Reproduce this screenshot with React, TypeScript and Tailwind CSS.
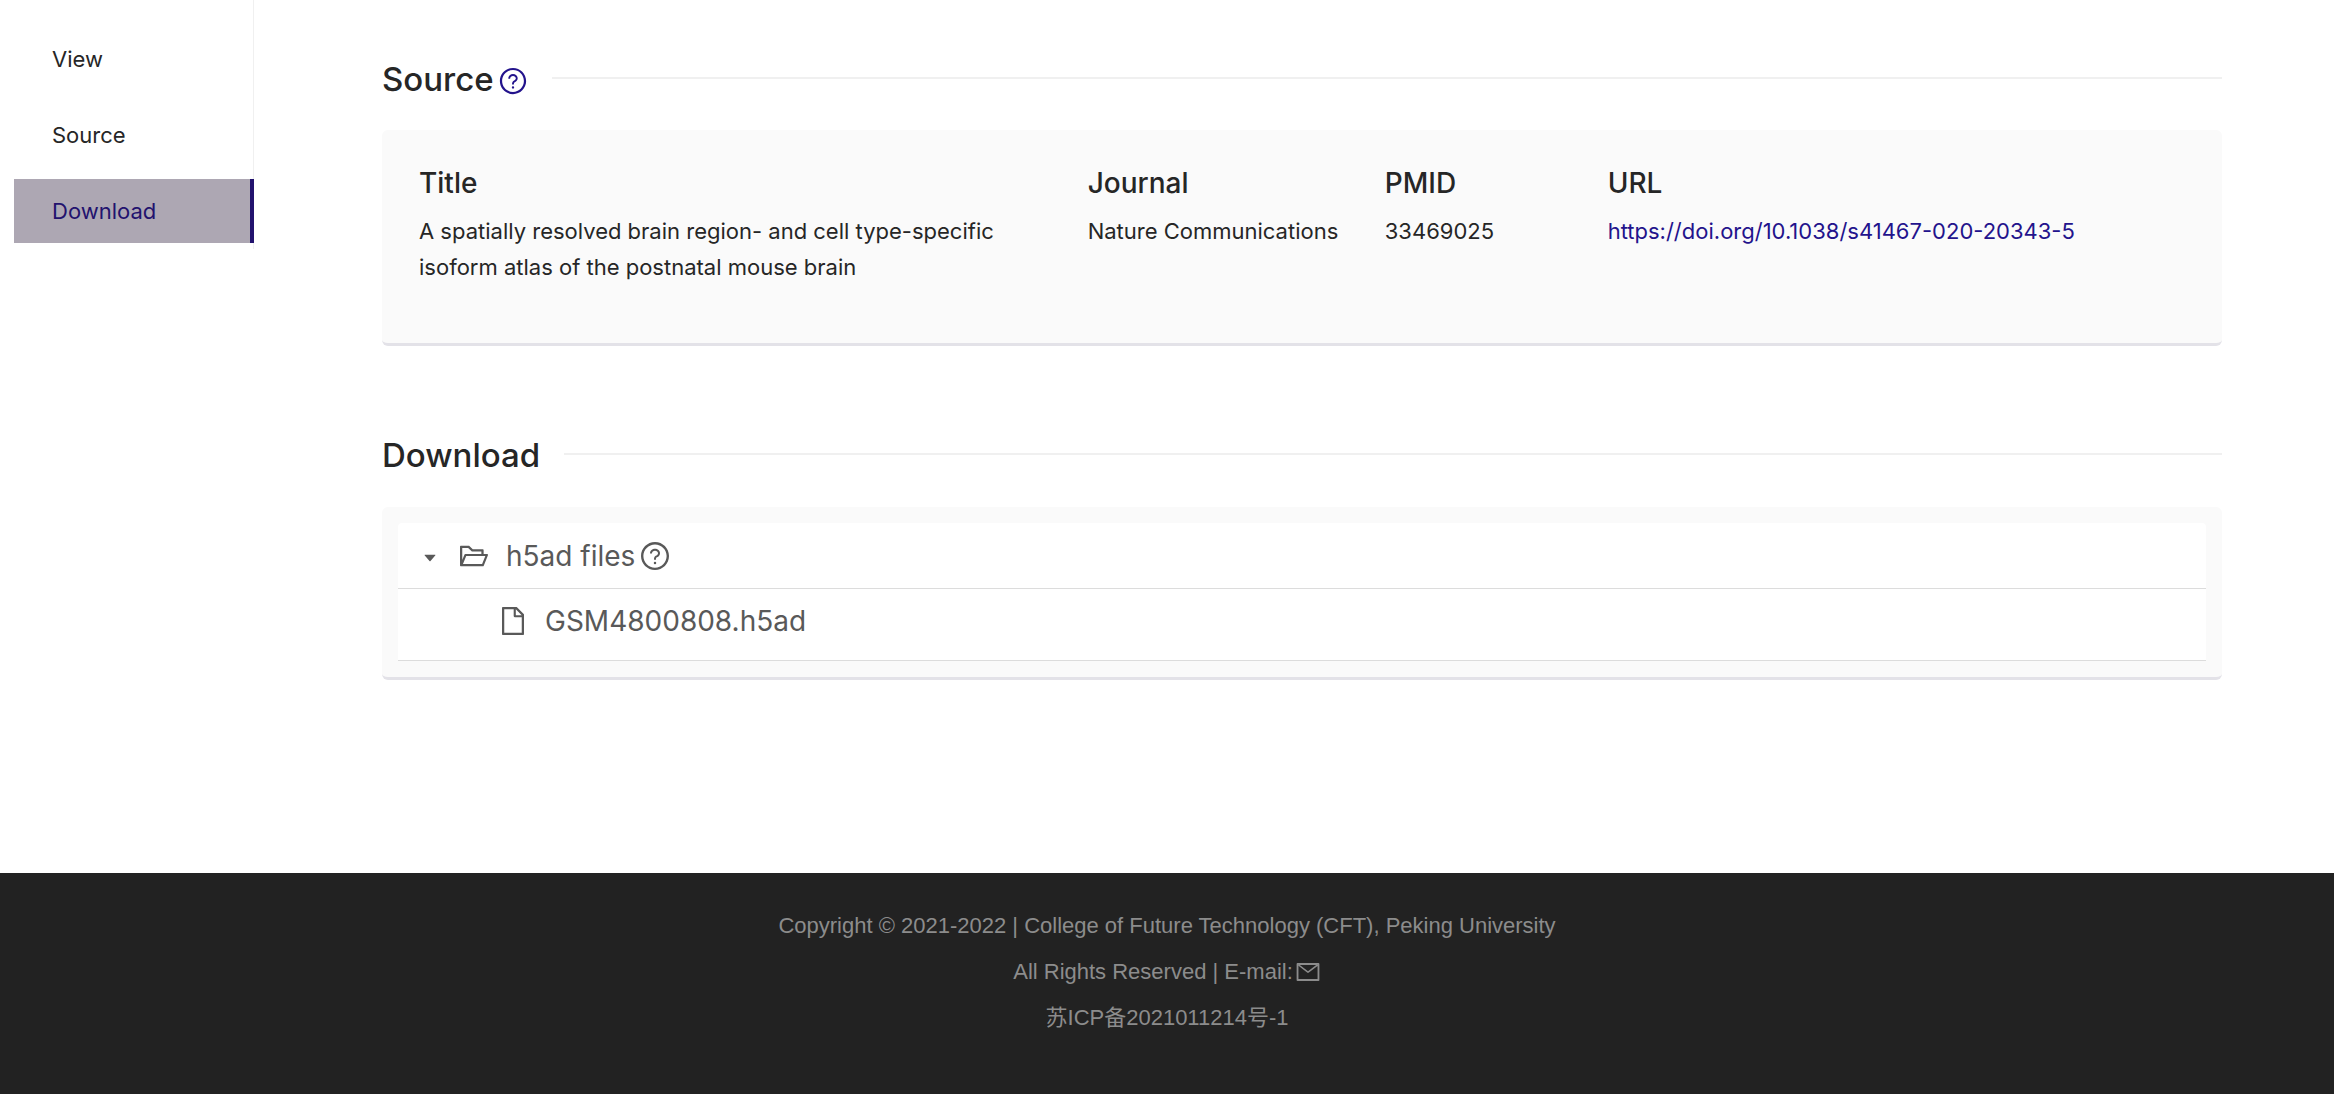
import {
  AiFillCaretDown,
  AiOutlineFile,
  AiOutlineFolderOpen,
  AiOutlineMail,
  AiOutlineQuestionCircle,
} from "react-icons/ai";
import type { ReactNode } from "react";

const navItems = [
  { label: "View", href: "#view" },
  { label: "Source", href: "#source" },
  { label: "Download", href: "#download", active: true },
];

function SideNav() {
  return (
    <nav className="w-[254px] shrink-0 self-start pl-3.5">
      <ul className="flex flex-col gap-3 border-r border-[#f0f0f0] pt-[27px] pb-1.5">
        {navItems.map((item) => (
          <li key={item.label} className="-mr-px">
            <a
              href={item.href}
              aria-current={item.active ? "page" : undefined}
              className={
                item.active
                  ? "flex h-16 items-center border-r-4 border-[#22126e] bg-[#ada7b3] pl-[38px] text-[#22126e]"
                  : "flex h-16 items-center pl-[38px]"
              }
            >
              {item.label}
            </a>
          </li>
        ))}
      </ul>
    </nav>
  );
}

function SectionHeading({ title, children }: { title: string; children?: ReactNode }) {
  return (
    <div className="flex items-center gap-6">
      <div className="flex items-center gap-1">
        <h2 className="pt-0.5 text-[33px] leading-[50px] font-medium">{title}</h2>
        {children}
      </div>
      <div className="h-0.5 flex-1 bg-[#f0f0f0]" />
    </div>
  );
}

function Field({ label, children }: { label: string; children: ReactNode }) {
  return (
    <div className="pr-8">
      <dt className="mb-2.5 text-[28px] leading-10 font-medium">{label}</dt>
      <dd>{children}</dd>
    </div>
  );
}

export default function App() {
  return (
    <div className="flex min-h-screen flex-col bg-white font-['Inter',sans-serif] text-[22px] leading-9 text-[#262626]">
      <div className="flex flex-1">
        <SideNav />
        <main className="min-w-0 flex-1 pt-[52px] pr-28 pb-48 pl-32">
          <section id="source">
            <SectionHeading title="Source">
              <button type="button" aria-label="About the source" className="mt-1.5 text-[#23138c]">
                <AiOutlineQuestionCircle className="size-[30px]" />
              </button>
            </SectionHeading>
            <dl className="mt-[26px] grid grid-cols-[9fr_4fr_3fr_8fr] rounded-md border-b-3 border-[#e3e2e8] bg-[#fafafa] pt-[33px] pr-5 pb-[58px] pl-[37px]">
              <Field label="Title">
                A spatially resolved brain region- and cell type-specific isoform atlas of the
                postnatal mouse brain
              </Field>
              <Field label="Journal">
                <span className="whitespace-nowrap">Nature Communications</span>
              </Field>
              <Field label="PMID">33469025</Field>
              <Field label="URL">
                <a href="https://doi.org/10.1038/s41467-020-20343-5" className="text-[#23138c]">
                  https://doi.org/10.1038/s41467-020-20343-5
                </a>
              </Field>
            </dl>
          </section>

          <section id="download" className="mt-[82px]">
            <SectionHeading title="Download" />
            <div className="mt-[27px] rounded-md border-b-3 border-[#e3e2e8] bg-[#fafafa] p-4">
              <ul className="rounded-t-sm bg-white text-[28px] leading-10 text-[#595959]">
                <li className="flex h-[66px] items-center border-b border-[#dcdcdc] pl-6">
                  <button type="button" aria-label="Collapse h5ad files" className="mt-1">
                    <AiFillCaretDown className="size-4" />
                  </button>
                  <AiOutlineFolderOpen className="ml-5 size-8" />
                  <span className="ml-4">h5ad files</span>
                  <button type="button" aria-label="About h5ad files" className="ml-1">
                    <AiOutlineQuestionCircle className="size-8" />
                  </button>
                </li>
                <li className="h-[72px] border-b border-[#dcdcdc] pt-3 pl-[99px]">
                  <button type="button" className="flex items-center gap-4">
                    <AiOutlineFile className="size-8" />
                    GSM4800808.h5ad
                  </button>
                </li>
              </ul>
            </div>
          </section>
        </main>
      </div>

      <footer className="bg-[#222222] pt-[30px] pb-[53px] text-center font-['Liberation_Sans','Noto_Sans_CJK_SC',sans-serif] text-[22px] leading-[46px] text-[#8c8c8c]">
        <p>Copyright © 2021-2022 | College of Future Technology (CFT), Peking University</p>
        <p className="flex items-center justify-center gap-0.5">
          All Rights Reserved | E-mail:
          <a href="mailto:" aria-label="E-mail">
            <AiOutlineMail className="size-[26px]" />
          </a>
        </p>
        <p>苏ICP备2021011214号-1</p>
      </footer>
    </div>
  );
}
